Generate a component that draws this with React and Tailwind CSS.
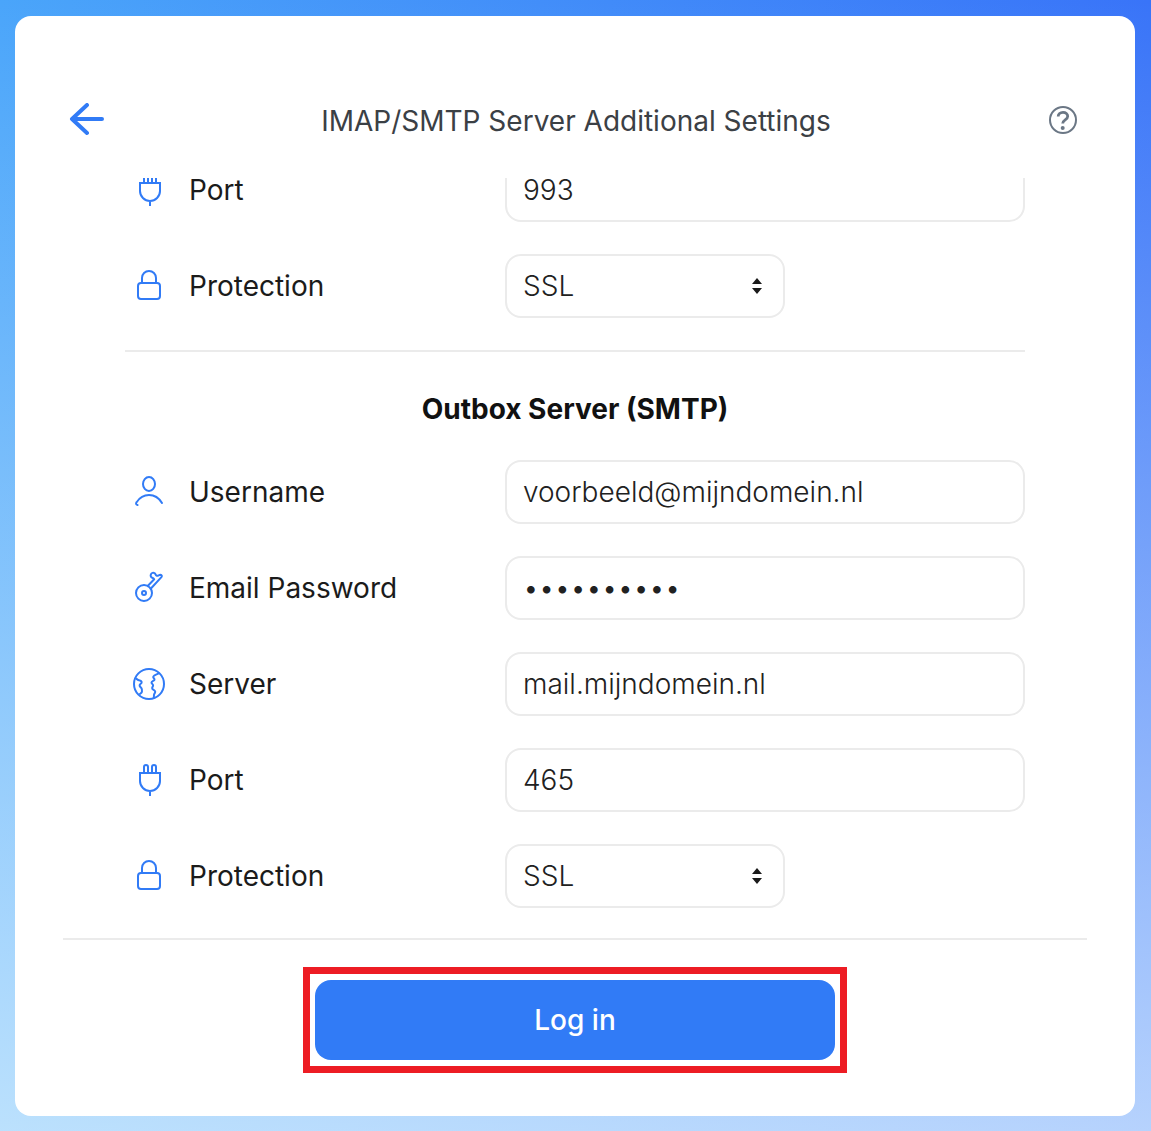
import { useState } from 'react';

const iconProps = {
  viewBox: '0 0 32 32',
  fill: 'none',
  stroke: 'currentColor',
  strokeWidth: 2,
  'aria-hidden': true,
  className: 'size-8 shrink-0 overflow-visible text-[#317bf6]',
};

function EthernetIcon() {
  return (
    <svg {...iconProps}>
      <path d="M7 9h20v8a10 10 0 0 1-20 0zM17 27v5M11 9V1M15 9V1M19 9V1M23 9V1" />
    </svg>
  );
}

function PlugIcon() {
  return (
    <svg {...iconProps}>
      <path d="M7 9h20v8a10 10 0 0 1-20 0zM17 27v5M11 9V3a2 2 0 0 1 4 0v6M19 9V3a2 2 0 0 1 4 0v6" />
    </svg>
  );
}

function LockIcon() {
  return (
    <svg {...iconProps}>
      <rect x="5" y="13" width="22" height="16" rx="3" />
      <path d="M9 13V8a7 7 0 0 1 14 0v5" />
    </svg>
  );
}

function UserIcon() {
  return (
    <svg {...iconProps} strokeLinecap="round">
      <ellipse cx="16" cy="8" rx="6" ry="7" />
      <path d="M4.5 29C3 28.8 2.6 27.6 3.6 26.2 6.6 21.6 11 19 16 19s10 3 13 8" />
    </svg>
  );
}

function KeyIcon() {
  return (
    <svg {...iconProps} strokeLinejoin="round">
      <circle cx="11" cy="21" r="8" />
      <circle cx="11" cy="21" r="2" />
      <path d="M14.200 14.500L21.200 7.200c-.3-.9-1-1.200-1.900-1.500-1.500-.6-2-2-1.400-3.400.6-1.400 2.400-2 3.800-1 1 .8.7 2 2.100 2.500 1.300.3 2.200-1 3.600-1 1.500.1 1.800 1.200 1 2.300L17 17.500" />
    </svg>
  );
}

function GlobeIcon() {
  return (
    <svg {...iconProps} strokeLinejoin="round">
      <circle cx="16" cy="16" r="15" />
      <path d="M2.500 10.500c1.500.3 2 1.500 3.500 1.800 1.600.4 3 1 2.600 2.400-.3 1-2.200 1.300-2 2.800.2 1.600 2 1.800 2.200 3.500.1 1.500.6 2.500-.3 3.700-.7.9-1.700 1-2 2" />
      <path d="M26.500 5c-2.500 1-6.300 2.300-6.300 4 0 1.200 1.600 1.400 1.300 2.700-.3 1.300-3 1-3 2.800 0 1.600 1.800 1.400 1.600 3-.1 1.400-1.500 1.800-.8 3.200.7 1.200 2.700 1.200 2.900 2.900.1 1.500-1 1.800-1.200 3.200-.2 1.200.2 2-.5 3.400" />
    </svg>
  );
}

const fieldClass =
  'h-16 w-full rounded-2xl border-2 border-[#ebebeb] bg-white px-4 text-[28px] text-[#212121] outline-none focus:border-[#317bf6]';

function Row({ id, label, icon, children }) {
  return (
    <div className="grid grid-cols-[380px_1fr] items-center">
      <div className="flex items-center gap-6 pl-2">
        {icon}
        <label htmlFor={id} className="text-[28px] leading-6 font-normal text-[#1b1b1b]">
          {label}
        </label>
      </div>
      {children}
    </div>
  );
}

function TextRow({ id, label, icon, type = 'text', initial }) {
  const [value, setValue] = useState(initial);
  return (
    <Row id={id} label={label} icon={icon}>
      <input id={id} type={type} value={value} onChange={(e) => setValue(e.target.value)} className={fieldClass} />
    </Row>
  );
}

function ProtectionRow({ id }) {
  return (
    <Row id={id} label="Protection" icon={<LockIcon />}>
      <div className="relative w-70">
        <select id={id} defaultValue="SSL" className={`${fieldClass} appearance-none`}>
          <option>SSL</option>
          <option>STARTTLS</option>
          <option>None</option>
        </select>
        <svg viewBox="0 0 10 16" fill="#1b1b1b" aria-hidden="true" className="pointer-events-none absolute top-6 right-[23px] h-4 w-[10px]">
          <path d="M0 6l5-6 5 6zM0 10h10l-5 6z" />
        </svg>
      </div>
    </Row>
  );
}

function App() {
  return (
    <div className="flex min-h-screen flex-col bg-[linear-gradient(to_bottom,rgba(235,250,255,0),rgba(235,250,255,0.7)),linear-gradient(to_right,#4aa5fa,#3974f8)] pt-4 pr-4 pb-[15px] pl-[15px] font-['Inter',sans-serif] font-light">
      <main className="flex grow flex-col rounded-2xl bg-white px-12">
        <header className="flex h-[162px] items-center justify-between pt-12">
          <button type="button" aria-label="Back" className="ml-1.5 cursor-pointer">
            <svg viewBox="0 0 36 36" fill="none" stroke="#317bf6" strokeWidth="4" strokeLinecap="round" strokeLinejoin="round" className="size-9">
              <path d="M33 16H3M18 2L3 16l15 14" className="origin-center" />
            </svg>
          </button>
          <h1 className="text-[28px] font-normal text-[#3b4045]">IMAP/SMTP Server Additional Settings</h1>
          <button type="button" aria-label="Help" className="mr-2 cursor-pointer">
            <svg viewBox="0 0 32 32" fill="none" stroke="#6b7785" strokeWidth="2" className="size-8">
              <circle cx="16" cy="15" r="13" />
              <path d="M11.200 11.500c0-2.500 2-4.200 4.800-4.200s4.700 1.700 4.700 4c0 3.700-5 3.500-5 7.200" strokeWidth="2.800" />
              <circle cx="15.700" cy="23" r="2" fill="#6b7785" stroke="none" />
            </svg>
          </button>
        </header>

        <form id="server-settings" className="overflow-hidden px-[62px] pb-[30px]">
          <div className="-mt-5 flex flex-col gap-8 border-b-2 border-[#ebebeb] pb-8">
            <TextRow id="imap-port" label="Port" icon={<EthernetIcon />} initial="993" />
            <ProtectionRow id="imap-protection" />
          </div>

          <h2 className="flex h-27 items-center justify-center pt-1.5 text-[28px] font-bold text-[#111111]">Outbox Server (SMTP)</h2>

          <div className="flex flex-col gap-8">
            <TextRow id="smtp-username" label="Username" icon={<UserIcon />} initial="voorbeeld@mijndomein.nl" />
            <TextRow id="smtp-password" label="Email Password" icon={<KeyIcon />} type="password" initial="voorbeeld1" />
            <TextRow id="smtp-server" label="Server" icon={<GlobeIcon />} initial="mail.mijndomein.nl" />
            <TextRow id="smtp-port" label="Port" icon={<PlugIcon />} initial="465" />
            <ProtectionRow id="smtp-protection" />
          </div>
        </form>

        <footer className="flex justify-center border-t-2 border-[#ebebeb] pt-[27px]">
          <div className="w-full max-w-[544px] border-7 border-[#ed1c24] px-[5px] py-1.5">
            <button type="submit" form="server-settings" className="h-20 w-full cursor-pointer rounded-2xl bg-[#317bf6] text-[28px] font-medium text-white">
              Log in
            </button>
          </div>
        </footer>
      </main>
    </div>
  );
}

export default App;
